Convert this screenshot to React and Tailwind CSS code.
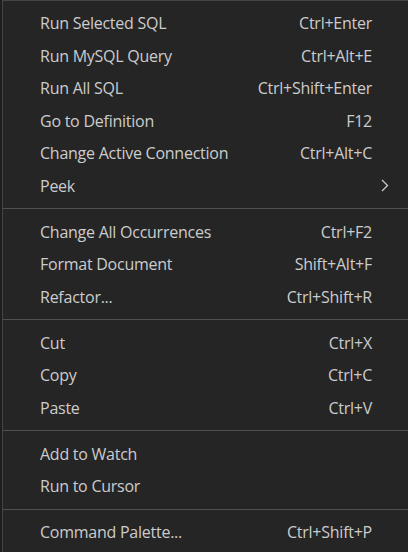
import React from 'react';

const GROUPS = [
  [
    { label: 'Run Selected SQL', keys: 'Ctrl+Enter' },
    { label: 'Run MySQL Query', keys: 'Ctrl+Alt+E' },
    { label: 'Run All SQL', keys: 'Ctrl+Shift+Enter' },
    { label: 'Go to Definition', keys: 'F12' },
    { label: 'Change Active Connection', keys: 'Ctrl+Alt+C' },
    { label: 'Peek', submenu: true },
  ],
  [
    { label: 'Change All Occurrences', keys: 'Ctrl+F2' },
    { label: 'Format Document', keys: 'Shift+Alt+F' },
    { label: 'Refactor...', keys: 'Ctrl+Shift+R' },
  ],
  [
    { label: 'Cut', keys: 'Ctrl+X' },
    { label: 'Copy', keys: 'Ctrl+C' },
    { label: 'Paste', keys: 'Ctrl+V' },
  ],
  [
    { label: 'Add to Watch' },
    { label: 'Run to Cursor' },
  ],
  [
    { label: 'Command Palette...', keys: 'Ctrl+Shift+P' },
  ],
];

const MenuItem = ({ item }) => (
  <div className="flex items-center h-[32.5px] text-[#cccccc]">
    <span className="flex-1 pl-[37px] whitespace-nowrap">{item.label}</span>
    {item.keys && <span className="whitespace-nowrap">{item.keys}</span>}
    <span className="w-[36px] flex items-center pl-[9px]">
      {item.submenu && (
        <svg width="8" height="13" viewBox="0 0 8 13" fill="none">
          <path d="M1 1 L6.5 6.5 L1 12" stroke="#cccccc" strokeWidth="1.3" />
        </svg>
      )}
    </span>
  </div>
);

export default function App() {
  return (
    <div className="w-[408px] h-[552px] overflow-hidden bg-[#1e1e1e] pl-[2px] flex">
      <div
        className="flex-1 bg-[#252526] border-l border-t border-[#454545] pt-[6px] text-[16px] tracking-[-0.25px]"
        style={{ fontFamily: '"Open Sans", "Noto Sans", sans-serif' }}
      >
        {GROUPS.map((group, gi) => (
          <div key={gi}>
            {gi > 0 && (
              <div className="h-[13.5px] flex items-center">
                <div className="h-px w-full bg-[#505050]" />
              </div>
            )}
            {group.map((item) => (
              <MenuItem key={item.label} item={item} />
            ))}
          </div>
        ))}
      </div>
    </div>
  );
}
